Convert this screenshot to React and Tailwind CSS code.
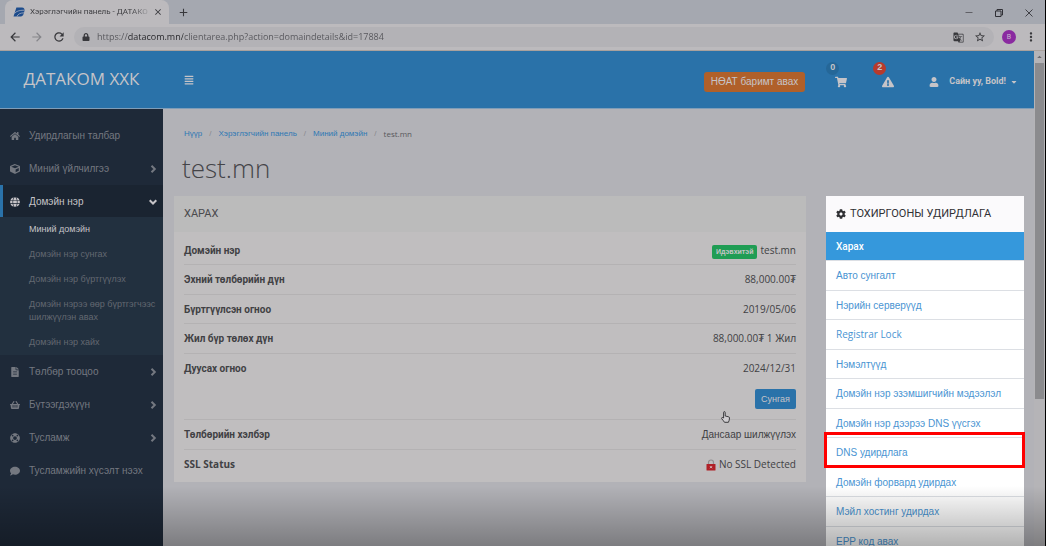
import React from "react";
import {
  FaHome, FaCube, FaGlobe, FaFileAlt, FaShoppingBasket, FaLifeRing, FaComment,
  FaShoppingCart, FaExclamationTriangle, FaUser,
  FaCog, FaCaretDown, FaLock, FaAlignJustify,
} from "react-icons/fa";
import {
  MdArrowBack, MdArrowForward, MdRefresh, MdClose, MdAdd, MdStarBorder,
  MdMoreVert, MdGTranslate, MdArrowDropUp,
} from "react-icons/md";

const domainLinks = [
  "Миний домэйн",
  "Домэйн нэр сунгах",
  "Домэйн нэр бүртгүүлэх",
  "Домэйн нэрээ өөр бүртгэгчээс шилжүүлэн авах",
  "Домэйн нэр хайх",
];

const menu = [
  { label: "Удирдлагын талбар", Icon: FaHome },
  { label: "Миний үйлчилгээ", Icon: FaCube, more: true },
  { label: "Домэйн нэр", Icon: FaGlobe, active: true, children: domainLinks },
  { label: "Төлбөр тооцоо", Icon: FaFileAlt, more: true },
  { label: "Бүтээгдэхүүн", Icon: FaShoppingBasket, more: true },
  { label: "Тусламж", Icon: FaLifeRing, more: true },
  { label: "Тусламжийн хүсэлт нээх", Icon: FaComment },
];

const settings = [
  { label: "Харах", active: true },
  { label: "Авто сунгалт" },
  { label: "Нэрийн серверүүд" },
  { label: "Registrar Lock", latin: true },
  { label: "Нэмэлтүүд" },
  { label: "Домэйн нэр эзэмшигчийн мэдээлэл" },
  { label: "Домэйн нэр дээрээ DNS үүсгэх" },
  { label: "DNS удирдлага", marked: true },
  { label: "Домэйн форвард удирдах" },
  { label: "Мэйл хостинг удирдах" },
  { label: "EPP код авах" },
];

function Logo() {
  return (
    <svg viewBox="0 0 12 10" className="h-[10px] w-3 shrink-0" aria-hidden="true">
      <path d="M3.4 0.5H9q3 0 2.4 3.6Q10.6 9.5 8 9.5H0.5Z" fill="#1d4c8c" />
      <path d="M1.6 6.3Q4 3.2 11 3.2M4 9.5Q5.2 6 11 5.8" stroke="#b9bbc6" strokeWidth="0.7" fill="none" />
    </svg>
  );
}

function Chevron({ down }) {
  return (
    <svg viewBox="0 0 8 8" className="ml-auto size-2" fill="none" stroke="currentColor" strokeWidth="2" aria-hidden="true">
      <path d={down ? "M0.7 2.2L4 5.5L7.3 2.2" : "M2.5 0.7L5.8 4L2.5 7.3"} />
    </svg>
  );
}

function Browser() {
  return (
    <div className="shrink-0 font-['Roboto','Noto_Sans',sans-serif] text-[#38383c]">
      <div className="flex h-6 items-end bg-[#a5a8b0]">
        <div className="ml-[5px] flex h-6 w-[164px] items-center gap-[5px] rounded-t-lg bg-[#bcbabd] pl-[8px] pr-[6px]">
          <Logo />
          <span className="whitespace-nowrap bg-linear-to-r from-[#38383c] from-85% to-[#a0a0a4] bg-clip-text text-[8px] text-transparent">
            Хэрэглэгчийн панель - ДАТАКО
          </span>
          <button aria-label="Close tab" className="ml-auto"><MdClose className="size-[10px]" /></button>
        </div>
        <button aria-label="New tab" className="ml-2 flex h-6 items-center"><MdAdd className="size-[13px]" /></button>
        <div className="ml-auto flex h-[22px] items-center gap-[22px] pr-[12px]">
          <button aria-label="Minimize">
            <svg viewBox="0 0 8 8" className="size-2"><path d="M0.5 3.5h7" stroke="#606066" /></svg>
          </button>
          <button aria-label="Restore">
            <svg viewBox="0 0 8 8" className="size-2" fill="none" stroke="#303036"><path d="M0.5 2h5.5v5.5H0.5ZM2 2V0.5h5.5V6H6" /></svg>
          </button>
          <button aria-label="Close">
            <svg viewBox="0 0 8 8" className="size-2" stroke="#404046"><path d="M0.5 0.5l7 7M7.5 0.5l-7 7" /></svg>
          </button>
        </div>
      </div>
      <div className="flex h-[27px] items-center border-b border-[#a9a19d] bg-[#bcbabd] pl-2 pr-[7px]">
        <div className="flex items-center gap-2">
          <button aria-label="Back"><MdArrowBack className="size-[14px]" /></button>
          <button aria-label="Forward"><MdArrowForward className="size-[14px] text-[#85858a]" /></button>
          <button aria-label="Reload"><MdRefresh className="size-[14px]" /></button>
        </div>
        <div className="ml-2 flex h-5 flex-1 items-center rounded-full bg-[#b3b2b6] pl-2 pr-[8px]">
          <FaLock className="size-2" />
          <input
            aria-label="Address"
            readOnly
            value="https://datacom.mn/clientarea.php?action=domaindetails&id=17884"
            className="ml-[7px] w-[400px] bg-[linear-gradient(90deg,#55555a_31px,#242428_31px,#242428_86px,#55555a_86px)] bg-clip-text font-['Open_Sans',sans-serif] text-[9px] text-transparent outline-none"
          />
          <button aria-label="Translate" className="ml-auto"><MdGTranslate className="size-[11px]" /></button>
          <button aria-label="Bookmark" className="ml-[10px]"><MdStarBorder className="size-3" /></button>
        </div>
        <button className="ml-[8px] size-[14px] rounded-full bg-[#8a2aa0] text-[7px] leading-[14px] text-[#c9b8cf]">B</button>
        <button aria-label="Menu" className="ml-2"><MdMoreVert className="size-[14px]" /></button>
      </div>
    </div>
  );
}

function Header() {
  return (
    <header className="flex h-[58px] shrink-0 items-center border-b border-[#7f9db8] bg-[#2a72a9] text-[#c6c4c8]">
      <a href="#home" className="w-[163px] pb-[2px] text-center font-['Open_Sans',sans-serif] text-[17px]">ДАТАКОМ ХХК</a>
      <button aria-label="Toggle menu" className="ml-[21px]"><FaAlignJustify className="size-[10px]" /></button>
      <div className="ml-auto flex items-center pr-4 pt-1">
        <button className="h-5 rounded-[3px] bg-[#b0602a] px-[7px] text-[10px]">НӨАТ баримт авах</button>
        <button aria-label="Cart" className="relative ml-[30px]">
          <FaShoppingCart className="size-3" />
          <span className="absolute -left-[9px] -top-[14px] flex size-[13px] items-center justify-center rounded-full bg-[#256798] text-[9px] font-bold">0</span>
        </button>
        <button aria-label="Alerts" className="relative ml-[35px]">
          <FaExclamationTriangle className="size-3" />
          <span className="absolute -left-[9px] -top-[14px] flex size-[13px] items-center justify-center rounded-full bg-[#b83a2c] text-[9px] font-bold">2</span>
        </button>
        <button className="ml-[35px] flex items-center font-['Roboto',sans-serif] text-[9px] font-bold">
          <FaUser className="mr-[10px] size-[10px]" />
          Сайн уу, Bold!
          <FaCaretDown className="ml-1 size-2" />
        </button>
      </div>
    </header>
  );
}

function Sidebar() {
  return (
    <nav className="w-[163px] shrink-0 bg-[#1e2938] pt-[10px] text-[10px] text-[#747880]">
      {menu.map(({ label, Icon, more, active, children }) => (
        <div key={label}>
          <a
            href="#menu"
            className={
              active
                ? "flex h-[33px] items-center border-l-[3px] border-[#2a72a9] bg-[#1a2431] pl-[7px] pr-[6px] text-[#c6c4c8]"
                : "flex h-[33px] items-center pl-[10px] pr-[6px]"
            }
          >
            <Icon className="mr-[9px] size-[10px]" />
            {label}
            {more && <Chevron />}
            {children && <Chevron down />}
          </a>
          {children && (
            <div className="-mt-px bg-[#22303f] text-[9px] leading-[13px] text-[#626871]">
              {children.map((item, i) => (
                <a key={item} href="#domain" className={i === 0 ? "block py-[6px] pl-[29px] text-[#c6c4c8]" : "block py-[6px] pl-[29px]"}>
                  {item}
                </a>
              ))}
            </div>
          )}
        </div>
      ))}
    </nav>
  );
}

function Row({ label, children, latin }) {
  return (
    <div className="flex min-h-[29px] items-start justify-between border-b border-[#b4b2b3] pt-[7px] leading-[15px] last:border-b-0 even:min-h-[30px]">
      <dt className={latin ? "font-['Open_Sans',sans-serif] font-bold" : "font-['Roboto',sans-serif] font-bold"}>{label}</dt>
      <dd className="text-right">{children}</dd>
    </div>
  );
}

function Details() {
  return (
    <section className="min-w-0 flex-1 self-start bg-[#c0bebf] text-[10px] text-[#414144]">
      <h2 className="flex h-9 items-center bg-[#bbbbbb] px-[10px] font-['Roboto',sans-serif] text-[11px] text-[#4a4a4d]">ХАРАХ</h2>
      <dl className="px-[10px] pb-[3px] pt-1">
        <Row label="Домэйн нэр">
          <span className="mr-[3px] inline-block rounded-[2px] bg-[#1f9d54] px-1 text-[7px] font-bold leading-[14px] text-[#c6c4c8]">Идэвхитэй</span>
          <span className="font-['Open_Sans',sans-serif]">test.mn</span>
        </Row>
        <Row label="Эхний төлбөрийн дүн"><span className="font-['Open_Sans',sans-serif]">88,000.00₮</span></Row>
        <Row label="Бүртгүүлсэн огноо"><span className="font-['Open_Sans',sans-serif]">2019/05/06</span></Row>
        <Row label="Жил бүр төлөх дүн"><span className="font-['Open_Sans',sans-serif]">88,000.00₮ 1</span> Жил</Row>
        <Row label="Дуусах огноо">
          <div className="font-['Open_Sans',sans-serif]">2024/12/31</div>
          <button className="mb-[10px] mt-[13px] h-5 rounded-[2px] bg-[#2a72a9] px-[6px] text-[9px] text-[#c6c4c8]">Сунгая</button>
        </Row>
        <Row label="Төлбөрийн хэлбэр">Дансаар шилжүүлэх</Row>
        <Row label="SSL Status" latin>
          <span className="flex items-center gap-[3px] font-['Open_Sans',sans-serif]">
            <svg viewBox="0 0 10 12" className="h-3 w-[10px]" aria-hidden="true">
              <path d="M2.5 6V3.5a2.5 2.5 0 0 1 5 0V6" fill="none" stroke="#918f90" strokeWidth="1.2" />
              <rect x="0.5" y="5" width="9" height="6.5" rx="0.5" fill="#b02027" />
              <path d="M4 7.2l2 2M6 7.2l-2 2" stroke="#d8c0c0" />
            </svg>
            No SSL Detected
          </span>
        </Row>
      </dl>
    </section>
  );
}

function Settings() {
  return (
    <aside className="w-[198px] shrink-0 bg-white text-[10px] text-[#4a94d2]">
      <h2 className="flex h-9 items-center gap-1 bg-[#fbfafc] px-[10px] font-['Roboto',sans-serif] text-[11px] text-[#303034]">
        <FaCog className="size-[10px]" />
        ТОХИРГООНЫ УДИРДЛАГА
      </h2>
      <ul>
        {settings.map(({ label, active, marked, latin }) => (
          <li key={label} className="relative h-[29px] border-b border-[#dcdfe4] even:h-[30px]">
            <a
              href="#settings"
              className={
                active
                  ? "flex h-full items-center bg-[#3598dc] px-[10px] font-['Roboto',sans-serif] font-medium text-white"
                  : latin
                    ? "flex h-full items-center px-[10px] font-['Open_Sans',sans-serif]"
                    : "flex h-full items-center px-[10px]"
              }
            >
              {label}
            </a>
            {marked && <span className="pointer-events-none absolute -bottom-px -left-[2px] -right-[1px] -top-[6px] z-10 border-[3px] border-[#ff0000]" />}
          </li>
        ))}
      </ul>
    </aside>
  );
}

function Pointer() {
  return (
    <svg viewBox="0 0 9 12" className="absolute left-[721px] top-[411px] h-3 w-[9px]" aria-hidden="true">
      <path d="M2.6 7V1.6q0-1 .8-1t.8 1V5l3.4.8q.9.2.9 1.2-.1 2.5-1.1 4.3H3.5Q2.4 9.6.8 7.8q-.5-.8.1-1.2T2.6 7Z" fill="#cfcdd0" stroke="#2c2c30" strokeWidth="0.9" />
    </svg>
  );
}

export default function App() {
  return (
    <div className="relative flex h-screen flex-col overflow-hidden border-r border-black bg-[#b2b2b7] font-['Liberation_Sans',Arial,sans-serif]">
      <Browser />
      <div className="flex min-h-0 flex-1">
        <div className="flex min-w-0 flex-1 flex-col">
          <Header />
          <div className="flex min-h-0 flex-1">
            <Sidebar />
            <main className="min-w-0 flex-1 pl-[11px] pr-[10px]">
              <nav aria-label="Breadcrumb" className="flex gap-[7px] pl-[10px] pt-[18px] text-[8px] leading-[13px] text-[#2e78b4]">
                <a href="#home">Нүүр</a>
                <span className="text-[#88888d]">/</span>
                <a href="#panel">Хэрэглэгчийн панель</a>
                <span className="text-[#88888d]">/</span>
                <a href="#domains">Миний домэйн</a>
                <span className="text-[#88888d]">/</span>
                <span className="font-['Open_Sans',sans-serif] text-[#58585c]">test.mn</span>
              </nav>
              <h1 className="pb-[10px] pl-2 pt-[10px] font-['Open_Sans',sans-serif] text-[26px] font-light leading-9 text-[#444448]">test.mn</h1>
              <div className="flex gap-5">
                <Details />
                <Settings />
              </div>
            </main>
          </div>
        </div>
        <div className="w-[11px] shrink-0 bg-[#b5b4b7]">
          <MdArrowDropUp className="h-3 w-[11px] text-[#69696e]" />
          <div className="mx-px h-[336px] bg-[#8b8b8e]" />
        </div>
      </div>
      <Pointer />
      <div className="pointer-events-none absolute inset-x-0 bottom-0 h-[60px] bg-linear-to-b from-transparent to-black/30" />
    </div>
  );
}
